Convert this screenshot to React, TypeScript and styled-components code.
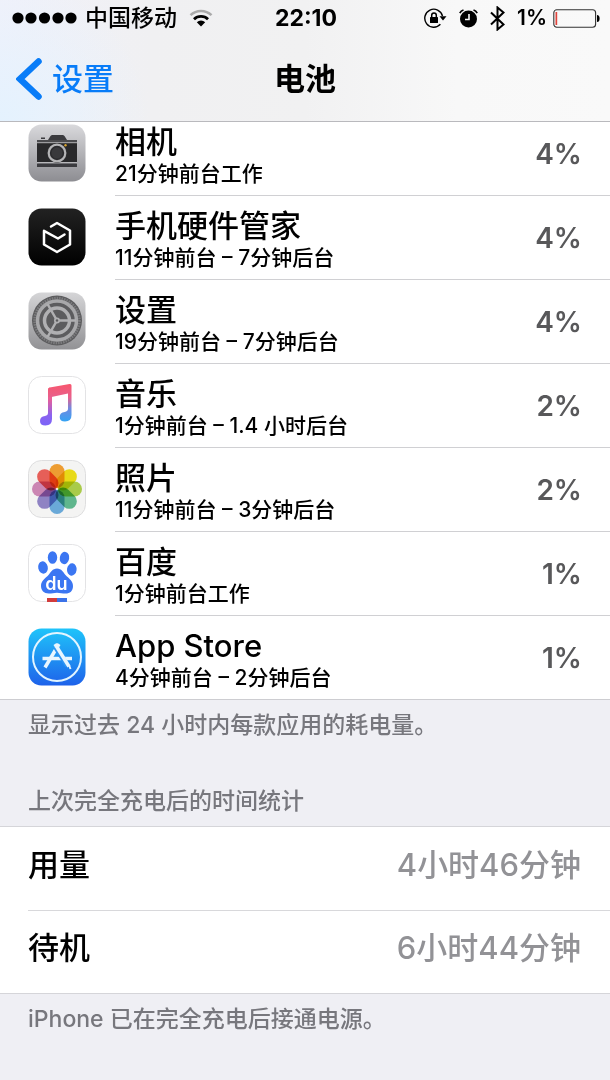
import React from "react";
import styled, { createGlobalStyle } from "styled-components";

const GlobalStyle = createGlobalStyle`
  *, *::before, *::after { box-sizing: border-box; }
  body {
    margin: 0;
    background: #efeff4;
    color: #000;
    font-family: Inter, "Noto Sans CJK SC", sans-serif;
    font-weight: 500;
  }
  h1, h2, p, ul, dl, dt, dd { margin: 0; padding: 0; font: inherit; }
  ul { list-style: none; }
  svg { display: block; flex: none; }
`;

const Screen = styled.div`
  min-height: 100vh;
  background: #efeff4;
`;

const Header = styled.header`
  position: sticky;
  top: 0;
  z-index: 1;
  border-bottom: 1px solid #b9b9bd;
  background:
    radial-gradient(circle at 0 100%, #e4f2fe 0, rgba(228, 242, 254, 0) 150px),
    linear-gradient(90deg, #f1f1fa 0, #f0f0f2 25%, #f1f1f2 50%, #f8f8f8 75%, #f9f9f9 100%);
`;

const StatusBar = styled.div`
  display: grid;
  grid-template-columns: 1fr auto 1fr;
  align-items: center;
  height: 36px;
  padding: 0 10px 0 12px;
  font-size: 23px;
  line-height: 36px;
`;

const StatusGroup = styled.div<{ $end?: boolean; $gap: number }>`
  display: flex;
  align-items: center;
  justify-content: ${(p) => (p.$end ? "flex-end" : "flex-start")};
  gap: ${(p) => p.$gap}px;
`;

const Carrier = styled.span`
  margin-right: 4px;
`;

const Clock = styled.time`
  font-weight: 700;
`;

const BatteryLevel = styled.span`
  display: flex;
  align-items: center;
  gap: 6px;
  font-size: 21px;
  font-weight: 600;
`;

const NavBar = styled.nav`
  display: grid;
  grid-template-columns: 1fr auto 1fr;
  align-items: center;
  height: 85px;
  padding: 0 16px;
`;

const BackButton = styled.button`
  display: flex;
  align-items: center;
  gap: 10px;
  justify-self: start;
  padding: 0;
  border: 0;
  background: none;
  color: #087cf8;
  font: inherit;
  font-size: 31px;
  line-height: 44px;
`;

const PageTitle = styled.h1`
  && {
    font-size: 31px;
    line-height: 44px;
    font-weight: 600;
  }
`;

const AppList = styled.ul`
  && { margin-top: -10px; }
  background: #fff;
  border-bottom: 1px solid #cdcdd1;
`;

const AppRow = styled.li`
  display: flex;
  gap: 29px;
  padding-left: 28px;
  background: #fff;
`;

const IconSlot = styled.div`
  display: flex;
  align-items: center;
  padding-bottom: 2px;
`;

const RowBody = styled.div`
  flex: 1;
  display: flex;
  align-items: center;
  justify-content: space-between;
  height: 84px;
  padding-right: 28px;
  border-bottom: 1px solid #d0d0d3;
  ${AppRow}:last-child & { border-bottom: 0; height: 83px; }
`;

const AppText = styled.div`
  padding-top: 4px;
`;

const AppName = styled.h2`
  && {
    font-size: 31px;
    line-height: 36px;
  }
`;

const AppTime = styled.p`
  && {
    font-size: 21px;
    line-height: 28px;
  }
`;

const Percent = styled.span`
  color: #58585a;
  font-size: 28px;
  font-weight: 600;
`;

const Note = styled.p<{ $kind: "footer" | "heading" }>`
  && {
    padding: ${(p) => (p.$kind === "footer" ? "8px 28px" : "34px 28px 8px")};
    color: #77777d;
    font-size: 23px;
    line-height: 34px;
  }
`;

const StatList = styled.dl`
  background: #fff;
  border: solid #d5d5d9;
  border-width: 1px 0;
`;

const StatRow = styled.div`
  display: flex;
  align-items: center;
  justify-content: space-between;
  height: 83px;
  margin-left: 28px;
  padding: 0 29px 8px 0;
  font-size: 31px;
  line-height: 44px;
  & + & { border-top: 1px solid #d8d8db; }
`;

const StatValue = styled.dd`
  && { color: #929296; }
`;

const AppIcon = ({ children }: { children: React.ReactNode }) => (
  <svg width="58" height="58" viewBox="0 0 58 58" aria-hidden="true">{children}</svg>
);

const CameraIcon = () => (
  <AppIcon>
    <defs>
      <linearGradient id="cam" x1="0" y1="0" x2="0" y2="1">
        <stop offset="0" stopColor="#d9d9dc" />
        <stop offset="1" stopColor="#8d8d92" />
      </linearGradient>
    </defs>
    <rect x=".5" y=".5" width="57" height="57" rx="13" fill="url(#cam)" />
    <path d="M13 15v-1.500h4V15M9 16h11l2.500-4q.8-1 2-1h10q1.200 0 2 1l2.500 4h10v3H9z" fill="#3b3b3f" />
    <rect x="9" y="17.500" width="40" height="21" fill="#29292b" />
    <rect x="9" y="16" width="40" height="2" fill="#4b4b4e" />
    <path d="M9 18.700h40M9 38.500h40" stroke="#b8b8bb" strokeWidth="1" />
    <rect x="9" y="39.500" width="40" height="3.500" rx=".5" fill="#3b3b3f" />
    <circle cx="29" cy="29" r="10" fill="#333335" />
    <circle cx="29" cy="29" r="8.300" fill="#2c2c2f" stroke="#b5b5b7" strokeWidth="2.200" />
    <circle cx="29" cy="29" r="5.500" fill="#39393c" />
    <circle cx="37.500" cy="21.200" r="1.200" fill="#d8a32c" />
  </AppIcon>
);

const HardwareIcon = () => (
  <AppIcon>
    <defs>
      <linearGradient id="hw" x1="0" y1="0" x2="0" y2="1">
        <stop offset="0" stopColor="#222" />
        <stop offset="1" stopColor="#000" />
      </linearGradient>
    </defs>
    <rect x=".5" y=".5" width="57" height="57" rx="13" fill="url(#hw)" />
    <path
      d="M23 18.500 29 15l13 7.500v14L29 44l-13-7.500V22.800l14 7.700 6.500-4"
      fill="none"
      stroke="#fff"
      strokeWidth="2.500"
      strokeLinecap="round"
      strokeLinejoin="round"
    />
  </AppIcon>
);

const SettingsIcon = () => (
  <AppIcon>
    <defs>
      <linearGradient id="set" x1="0" y1="0" x2="0" y2="1">
        <stop offset="0" stopColor="#d5d5d7" />
        <stop offset="1" stopColor="#929295" />
      </linearGradient>
    </defs>
    <rect x=".5" y=".5" width="57" height="57" rx="13" fill="url(#set)" />
    <circle cx="29" cy="28.500" r="25" fill="#5c5c5e" />
    <circle cx="29" cy="28.500" r="22.500" fill="none" stroke="#7c7c7e" strokeWidth="2.500" strokeDasharray="1.500 1" />
    <circle cx="29" cy="28.500" r="19.500" fill="none" stroke="#a8a8aa" strokeWidth="3.500" />
    <circle cx="29" cy="28.500" r="12.500" fill="none" stroke="#b0b0b2" strokeWidth="3.500" />
    <path
      d="M29 28.500H48M29 28.500 19.500 12M29 28.500 19.500 45"
      stroke="#b0b0b2"
      strokeWidth="2.500"
    />
    <circle cx="29" cy="28.500" r="3" fill="#b0b0b2" />
    <circle cx="29" cy="28.500" r="1.200" fill="#5c5c5e" />
  </AppIcon>
);

const MusicIcon = () => (
  <AppIcon>
    <defs>
      <linearGradient id="musLeft" gradientUnits="userSpaceOnUse" x1="0" y1="8" x2="0" y2="50">
        <stop offset="0" stopColor="#f8566d" />
        <stop offset=".35" stopColor="#ea5f96" />
        <stop offset=".75" stopColor="#8a63f0" />
        <stop offset="1" stopColor="#7a63f8" />
      </linearGradient>
      <linearGradient id="musRight" gradientUnits="userSpaceOnUse" x1="0" y1="8" x2="0" y2="46">
        <stop offset="0" stopColor="#f8566d" />
        <stop offset=".35" stopColor="#e8608c" />
        <stop offset=".65" stopColor="#6f8ae0" />
        <stop offset="1" stopColor="#32a4f5" />
      </linearGradient>
    </defs>
    <rect x=".5" y=".5" width="57" height="57" rx="13" fill="#fff" stroke="#e3e3e5" />
    <path d="M20 14q0-2 2-2.400L24 19v24q0 6.500-6.500 6.500-5.500 0-5.500-4.500t5-5q3-.5 3-3.200z" fill="url(#musLeft)" />
    <path d="M20 13.800q0-1.700 1.700-2.200L41.500 8q2-.3 2 1.500V39q0 6.500-6.500 6.500-5.300 0-5.300-4.500t5-5q3.300-.6 3.300-3.200V17.500L23.500 21H20z" fill="url(#musRight)" />
  </AppIcon>
);

const PETALS = ["#f79a1e", "#f2e100", "#a9cf3a", "#52b788", "#5fa8e0", "#8b7cc8", "#cf7fb5", "#f0524a"];

const Petal = styled.rect`
  mix-blend-mode: multiply;
`;

const PhotosIcon = () => (
  <AppIcon>
    <rect x=".5" y=".5" width="57" height="57" rx="13" fill="#f4f4f3" stroke="#dededf" />
    {PETALS.map((color, i) => (
      <Petal
        key={color}
        x="21.500"
        y="4"
        width="15"
        height="24"
        rx="7.500"
        fill={color}
        fillOpacity=".9"
        transform={`rotate(${i * 45} 29 29)`}
      />
    ))}
  </AppIcon>
);

const BaiduIcon = () => (
  <AppIcon>
    <rect x=".5" y=".5" width="57" height="57" rx="13" fill="#fff" stroke="#e3e3e5" />
    <g fill="#3b76f2">
      <ellipse cx="24.500" cy="13.500" rx="4.700" ry="6.300" />
      <ellipse cx="36.500" cy="14" rx="4.700" ry="6.200" transform="rotate(10 36.500 14)" />
      <ellipse cx="15" cy="23.500" rx="4.800" ry="6.200" transform="rotate(-12 15 23.500)" />
      <ellipse cx="43.800" cy="25.500" rx="4.800" ry="6.200" transform="rotate(8 43.800 25.500)" />
      <path d="M29 24.500c4.500 0 6.200 3.800 8.500 6.500 3 3.300 7.500 5.500 7.500 11 0 5-3 7.500-7.500 7.500-3 0-5.500-.8-8.500-.8s-5 .8-8.300.8C16 49.500 13 46.500 13 42c0-5.500 4.500-7.700 7.500-11 2.300-2.700 4-6.500 8.500-6.500z" />
    </g>
    <text x="28.500" y="46" textAnchor="middle" fontSize="18" fontWeight="600" fill="#fff">du</text>
    <path d="M19 54h10v4H19z" fill="#d23c3c" />
    <path d="M29 54h10v4H29z" fill="#3b72e8" />
  </AppIcon>
);

const AppStoreIcon = () => (
  <AppIcon>
    <defs>
      <linearGradient id="store" x1="0" y1="0" x2="0" y2="1">
        <stop offset="0" stopColor="#1fc4fa" />
        <stop offset="1" stopColor="#1e62ea" />
      </linearGradient>
    </defs>
    <rect x=".5" y=".5" width="57" height="57" rx="13" fill="url(#store)" />
    <circle cx="29" cy="29" r="24" fill="none" stroke="#e2f5ff" strokeWidth="2" />
    <g stroke="#e8f6ff" fill="none">
      <path d="M14.500 30.500H44" strokeWidth="3.500" />
      <path d="M31 16 17 39.500" strokeWidth="3.500" />
      <path d="M27.500 19 39.500 38" stroke="#2d94f3" strokeWidth="5" />
      <path d="M27 16 41 38.500" strokeWidth="3.500" />
      <path d="m41 37 1.500 4" strokeWidth="2" />
    </g>
  </AppIcon>
);

const SignalDots = () => (
  <svg width="65" height="12" viewBox="0 0 65 12" role="img" aria-label="信号">
    {[6, 19, 32.5, 46, 59].map((cx) => (
      <circle key={cx} cx={cx} cy="6" r="5.600" />
    ))}
  </svg>
);

const WifiIcon = () => (
  <svg width="24" height="18" viewBox="0 0 24 18" role="img" aria-label="Wi-Fi">
    <path d="M1.500 6.200a15 15 0 0 1 21 0" fill="none" stroke="#aaa" strokeWidth="2.500" />
    <path d="M5 10.200a10 10 0 0 1 14 0" fill="none" stroke="#000" strokeWidth="2.800" />
    <path d="M12 17.500 7.800 13.200a6 6 0 0 1 8.400 0z" />
  </svg>
);

const RotationLockIcon = () => (
  <svg width="23" height="20" viewBox="0 0 23 20" role="img" aria-label="方向锁定">
    <path d="M18.500 8A9 9 0 1 0 16.400 16.300" fill="none" stroke="#000" strokeWidth="1.400" />
    <path d="M15.500 8.200H22.500L19 12.500z" />
    <rect x="6" y="9" width="8" height="6" rx=".6" />
    <path d="M7.700 9.500V7.300a2.300 2.300 0 0 1 4.600 0v2.200" fill="none" stroke="#000" strokeWidth="1.500" />
  </svg>
);

const AlarmIcon = () => (
  <svg width="19" height="19" viewBox="0 0 19 19" role="img" aria-label="闹钟">
    <circle cx="9.500" cy="10" r="8.500" />
    <path d="M10 5v5.500H6" fill="none" stroke="#f8f8f8" strokeWidth="1.600" />
    <path d="M.8 4.200Q2 1.800 4.500 1M18.200 4.200Q17 1.800 14.500 1" fill="none" stroke="#000" strokeWidth="1.700" />
  </svg>
);

const BluetoothIcon = () => (
  <svg width="15" height="25" viewBox="0 0 15 25" role="img" aria-label="蓝牙">
    <path d="m1 6.500 12.500 12L7.500 23.500v-22l6 5L1 18.500" fill="none" stroke="#000" strokeWidth="2" />
  </svg>
);

const BatteryIcon = () => (
  <svg width="47" height="19" viewBox="0 0 47 19" role="img" aria-label="电池">
    <rect x=".8" y=".8" width="41.800" height="17.400" rx="3" fill="none" stroke="#333" strokeWidth="1.100" />
    <path d="M2.500 3h1.700v13H2.500z" fill="#e0443c" />
    <path d="M44 6q2.600 0 2.600 3.500T44 13z" />
  </svg>
);

const BackChevron = () => (
  <svg width="26" height="42" viewBox="0 0 26 42" aria-hidden="true">
    <path d="M22.500 3.500 4 21l18.500 17.500" fill="none" stroke="#087cf8" strokeWidth="6.500" strokeLinecap="round" strokeLinejoin="miter" />
  </svg>
);

const apps = [
  { name: "相机", time: "21分钟前台工作", percent: "4%", Icon: CameraIcon },
  { name: "手机硬件管家", time: "11分钟前台 – 7分钟后台", percent: "4%", Icon: HardwareIcon },
  { name: "设置", time: "19分钟前台 – 7分钟后台", percent: "4%", Icon: SettingsIcon },
  { name: "音乐", time: "1分钟前台 – 1.4 小时后台", percent: "2%", Icon: MusicIcon },
  { name: "照片", time: "11分钟前台 – 3分钟后台", percent: "2%", Icon: PhotosIcon },
  { name: "百度", time: "1分钟前台工作", percent: "1%", Icon: BaiduIcon },
  { name: "App Store", time: "4分钟前台 – 2分钟后台", percent: "1%", Icon: AppStoreIcon },
];

const stats = [
  { label: "用量", value: "4小时46分钟" },
  { label: "待机", value: "6小时44分钟" },
];

export default function App() {
  return (
    <Screen lang="zh-CN">
      <GlobalStyle />
      <Header>
        <StatusBar>
          <StatusGroup $gap={8}>
            <SignalDots />
            <Carrier>中国移动</Carrier>
            <WifiIcon />
          </StatusGroup>
          <Clock>22:10</Clock>
          <StatusGroup $end $gap={12}>
            <RotationLockIcon />
            <AlarmIcon />
            <BluetoothIcon />
            <BatteryLevel>
              1%
              <BatteryIcon />
            </BatteryLevel>
          </StatusGroup>
        </StatusBar>
        <NavBar>
          <BackButton type="button">
            <BackChevron />
            设置
          </BackButton>
          <PageTitle>电池</PageTitle>
        </NavBar>
      </Header>
      <main>
        <AppList>
          {apps.map(({ name, time, percent, Icon }) => (
            <AppRow key={name}>
              <IconSlot>
                <Icon />
              </IconSlot>
              <RowBody>
                <AppText>
                  <AppName>{name}</AppName>
                  <AppTime>{time}</AppTime>
                </AppText>
                <Percent>{percent}</Percent>
              </RowBody>
            </AppRow>
          ))}
        </AppList>
        <Note $kind="footer">显示过去 24 小时内每款应用的耗电量。</Note>
        <Note $kind="heading">上次完全充电后的时间统计</Note>
        <StatList>
          {stats.map(({ label, value }) => (
            <StatRow key={label}>
              <dt>{label}</dt>
              <StatValue>{value}</StatValue>
            </StatRow>
          ))}
        </StatList>
        <Note $kind="footer">iPhone 已在完全充电后接通电源。</Note>
      </main>
    </Screen>
  );
}
